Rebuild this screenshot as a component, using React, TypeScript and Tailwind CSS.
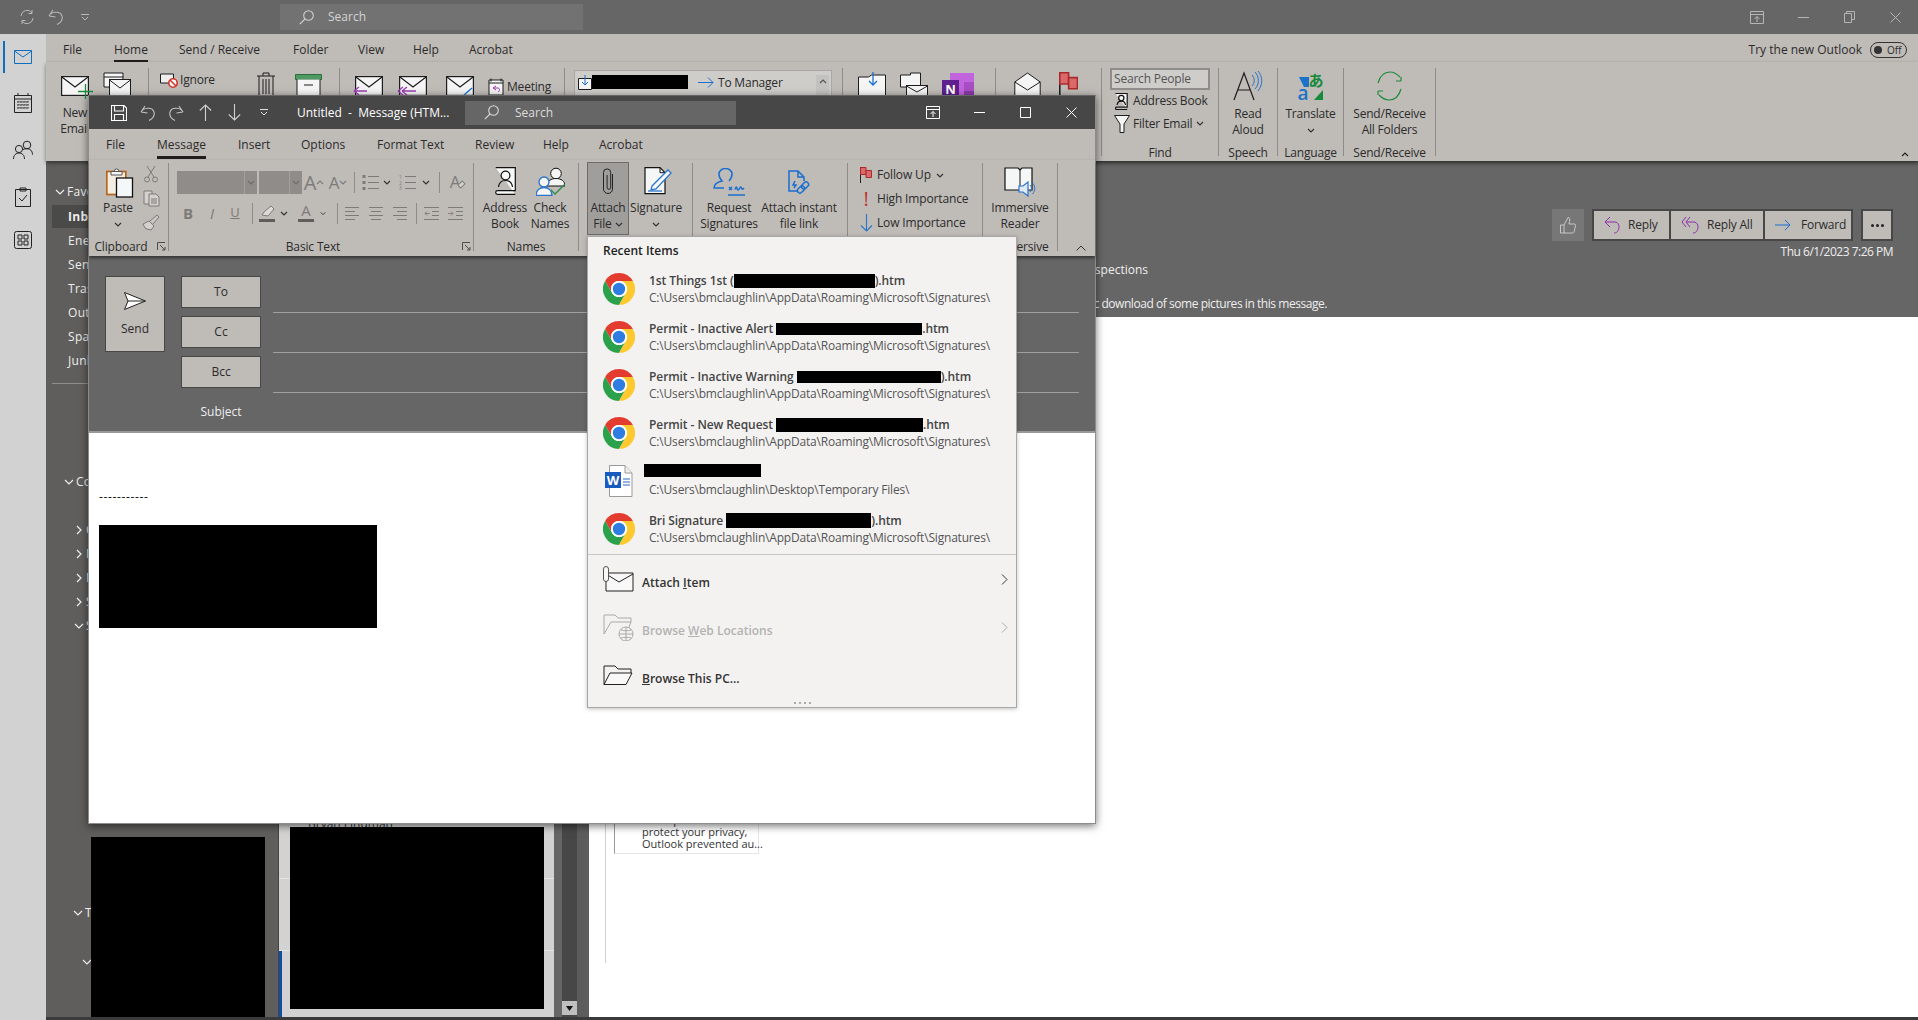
import React from "react";

const Ch = ({ c = "#333", r = 0 }: { c?: string; r?: number }) => (
  <svg width="8" height="5" viewBox="0 0 8 5" fill="none" stroke={c} strokeWidth="1.2" style={r ? { transform: `rotate(${r}deg)` } : undefined}>
    <path d="M1 1l3 3 3-3" />
  </svg>
);

const Chrome = () => (
  <svg width="32" height="32" viewBox="0 0 32 32">
    <path fill="#e33b2e" d="M16 0A16 16 0 0 1 29.86 8L16 8A8 8 0 0 0 9.07 20L2.14 8A16 16 0 0 1 16 0Z" />
    <path fill="#2aa14a" d="M2.14 8L9.07 20A8 8 0 0 0 22.93 20L16 32A16 16 0 0 1 2.14 8Z" />
    <path fill="#fdc92f" d="M16 32L22.93 20A8 8 0 0 0 16 8L29.86 8A16 16 0 0 1 16 32Z" />
    <circle cx="16" cy="16" r="8" fill="#fff" />
    <circle cx="16" cy="16" r="6.2" fill="#2f7de1" />
  </svg>
);

const WordDoc = () => (
  <svg width="28" height="32" viewBox="0 0 28 32">
    <path d="M4.5 .5H20L27 8V31.5H4.5Z" fill="#fff" stroke="#9a9a9a" />
    <path d="M20 .5V8H27" fill="#eee" stroke="#9a9a9a" />
    <path d="M18 14h7M18 17h7M18 20h7" stroke="#2b66c0" />
    <rect x="0" y="7" width="16" height="16" fill="#185abd" />
    <text x="8" y="20" fontSize="13" fontWeight="700" textAnchor="middle" fill="#fff" fontFamily="Open Sans">W</text>
  </svg>
);

const Env = ({ w = 28, h = 20 }: { w?: number; h?: number }) => (
  <svg width={w} height={h} viewBox="0 0 28 20" fill="#f5f5f5" stroke="#1d1d1d" strokeWidth="1.2">
    <rect x=".6" y=".6" width="26.8" height="18.8" />
    <path d="M.6 .8L14 11 27.4 .8" fill="none" />
  </svg>
);

const Quick = ({ children, w, h }: { children: React.ReactNode; w: number; h: number }) => (
  <svg width={w} height={h} viewBox={`0 0 ${w} ${h}`} fill="none" stroke="#1d1d1d" strokeWidth="1">
    {children}
  </svg>
);

const Grey = "#7d7b79";

const Paste = () => (
  <div className="ml-[3px]">
    <Quick w={28} h={31}>
      <rect x=".8" y="4.5" width="19" height="23" fill="#f4ede2" stroke="#b5651d" strokeWidth="1.7" />
      <path d="M5 4.5h11v3.5H5zM8 4.5a2.5 2.5 0 0 1 5 0" fill="#f5f5f5" stroke="#555" />
      <rect x="10.5" y="11" width="16" height="19" fill="#f5f8f8" stroke="#111" strokeWidth="1.3" />
    </Quick>
  </div>
);
const Scissors = () => (
  <Quick w={14} h={18}>
    <g stroke={Grey}>
      <path d="M3 1l7 11M11 1L4 12" />
      <circle cx="3" cy="14.5" r="2.5" />
      <circle cx="11" cy="14.5" r="2.5" />
    </g>
  </Quick>
);
const CopyI = () => (
  <Quick w={17} h={17}>
    <g stroke={Grey}>
      <path d="M1 1h8v13H1z" fill="#d4d2cf" />
      <path d="M6 4h7l3 3v9H6z" fill="#d4d2cf" />
      <path d="M8 9h6M8 11h6M8 13h6" />
    </g>
  </Quick>
);
const Brush = () => (
  <Quick w={18} h={17}>
    <g stroke={Grey}>
      <path d="M1 10l6-3 5 5-3 4-4-1-2-1z" fill="#d4d2cf" />
      <path d="M8 7l7-6 2 2-6 7" fill="#c9c7c4" />
    </g>
  </Quick>
);
const ListI = ({ num }: { num?: boolean }) => (
  <Quick w={17} h={15}>
    <g stroke={Grey}>
      <path d="M6 1.5h11M6 7.5h11M6 13.5h11" />
      {num ? (
        <g stroke="none" fill={Grey} fontSize="5" fontFamily="Open Sans">
          <text x="0" y="4">1</text>
          <text x="0" y="10">2</text>
          <text x="0" y="15">3</text>
        </g>
      ) : (
        <path d="M.5 0h3v3h-3zM.5 6h3v3h-3zM.5 12h3v3h-3z" fill={Grey} stroke="none" />
      )}
    </g>
  </Quick>
);
const Align = ({ k }: { k: 0 | 1 | 2 }) => {
  const d = k === 0 ? "M1 1.5h14M1 5.5h10M1 9.5h14M1 13.5h10" : k === 1 ? "M1 1.5h14M3 5.5h10M1 9.5h14M3 13.5h10" : "M1 1.5h14M5 5.5h10M1 9.5h14M5 13.5h10";
  return (
    <Quick w={16} h={15}>
      <path d={d} stroke={Grey} />
    </Quick>
  );
};
const Indent = ({ rev }: { rev?: boolean }) => (
  <Quick w={15} h={15}>
    <g stroke={Grey}>
      <path d="M0 1.5h15M8 5.5h7M8 9.5h7M0 13.5h15" />
      {rev ? <path d="M6 7.5H1M3 5.5l-2 2 2 2" stroke="#8d7f7d" /> : <path d="M0 7.5h5M3 5.5l2 2-2 2" stroke="#8d7f7d" />}
    </g>
  </Quick>
);
const Launch = () => (
  <Quick w={9} h={9}>
    <path d="M.5 8V.5H8M3 3l5 5M8 5v3H5" stroke="#4d4d4d" />
  </Quick>
);
const AddrBook = ({ s = 1 }: { s?: number }) => (
  <svg width={21 * s} height={28 * s} viewBox="0 0 21 28" fill="none" stroke="#111" strokeWidth={1.2 / s}>
    <path d="M.7 .7h19.6v23H2.5a1.8 1.8 0 0 0 0 3.6h17.8" fill="#f7f8f8" />
    <circle cx="10.5" cy="8.5" r="4.4" />
    <path d="M3.5 20c.5-4 3-6.5 7-6.5s6.5 2.500 7 6.500" />
  </svg>
);
const CheckNames = () => (
  <Quick w={29} h={29}>
    <circle cx="20" cy="6.500" r="5.300" fill="#f5f5f5" stroke="#111" />
    <path d="M11 19c0-5 4-7.500 9-7.500s9 2.500 9 7.500z" fill="#f5f5f5" stroke="#111" />
    <circle cx="8" cy="15" r="5" fill="#f5f5f5" stroke="#2a74c9" strokeWidth="1.300" />
    <path d="M0 28.500c0-5 3.500-8 8-8s8 3 8 8z" fill="#f5f5f5" stroke="#2a74c9" strokeWidth="1.300" />
    <path d="M15 23l4 4 10-10" stroke="#2e8b4a" strokeWidth="1.300" />
  </Quick>
);
const Clip = () => (
  <Quick w={13} h={29}>
    <path d="M10.500 7v15a4.500 4.500 0 0 1-9 0V5.500a3.600 3.600 0 0 1 7.200 0v15a1.800 1.800 0 0 1-3.600 0V8" stroke="#222" strokeWidth="1" />
  </Quick>
);
const Sign = () => (
  <Quick w={28} h={28}>
    <path d="M1 .7h15l5 5v21H1z" fill="#f5f7f7" stroke="#111" strokeWidth="1.200" />
    <path d="M16 .7v5h5" stroke="#111" />
    <path d="M8 19L24 3l3 3-15 16-5 1z" fill="#f5f7f7" stroke="#2a74c9" strokeWidth="1.300" />
    <path d="M4 24h14" stroke="#2a74c9" strokeWidth="1.300" />
  </Quick>
);
const ReqSign = () => (
  <Quick w={32} h={28}>
    <g stroke="#1a6fd0" strokeWidth="1.500">
      <path d="M11 20H1C1 16 5 14 9 13 7 11 6 8 6 6A6.500 5.500 0 0 1 19 6C19 9 18 11 16 13" />
      <path d="M16 19l3 3M19 19l-3 3M22 21.500c1-3 1.500-3 2-1s1.500 2 2.500 0 1.500-2 2-.5 1.500 1.500 2.500 0M15 27h17" />
    </g>
  </Quick>
);
const AttachLink = () => (
  <Quick w={22} h={24}>
    <g stroke="#1a6fd0" strokeWidth="1.500">
      <path d="M10 21H1V1h9l6 6v4M10 1v6h6" />
      <path d="M7 11l-2 4h3l-2 3" />
      <rect x="9" y="17" width="8" height="5" rx="2.500" transform="rotate(-45 13 19.500)" />
      <rect x="13" y="13" width="8" height="5" rx="2.500" transform="rotate(-45 17 15.500)" />
    </g>
  </Quick>
);
const Flag = ({ s = 1 }: { s?: number }) => (
  <svg width={12 * s} height={16 * s} viewBox="0 0 12 16" fill="none">
    <path d="M.5 0v16" stroke="#222" />
    <path d="M.5 .5h5.500v7H.5z" fill="#d96a69" stroke="#a92a2a" />
    <path d="M6 3.500h5.500v7H6z" fill="#d96a69" stroke="#a92a2a" />
  </svg>
);
const Immersive = () => (
  <Quick w={32} h={31}>
    <path d="M1 1h13l2 2 2-2h10v22H1z" fill="#f5f7f7" stroke="#111" strokeWidth="1.200" />
    <path d="M16 3v20" stroke="#111" />
    <path d="M15 19h4l5-4v14l-5-4h-4z" fill="#dfe9f2" stroke="#2a74c9" strokeWidth="1.200" />
    <path d="M26 18c2 2 2 5 0 7M28.500 16c3 3.500 3 7.500 0 11" stroke="#2a74c9" />
  </Quick>
);
const Win = ({ c, restore }: { c: string; restore?: boolean }) => (
  <div className="flex items-center">
    <div className="w-[46px] flex justify-center">
      <svg width="14" height="13" viewBox="0 0 14 13" fill="none" stroke={c}>
        <path d="M.5 .5h13v12H.5zM.5 3.500h13M7 11V5.500M4.500 8L7 5.500 9.500 8" />
      </svg>
    </div>
    <div className="w-[46px] flex justify-center">
      <svg width="11" height="1" viewBox="0 0 11 1"><path d="M0 .5h11" stroke={c} /></svg>
    </div>
    <div className="w-[46px] flex justify-center">
      {restore ? (
        <svg width="11" height="12" viewBox="0 0 11 12" fill="none" stroke={c}><path d="M.5 2.500h7v9h-7zM2.500 2.500V.5h8v8h-3" /></svg>
      ) : (
        <svg width="11" height="11" viewBox="0 0 11 11" fill="none" stroke={c}><path d="M.5 .5h10v10H.5z" /></svg>
      )}
    </div>
    <div className="w-[46px] flex justify-center">
      <svg width="11" height="11" viewBox="0 0 11 11" fill="none" stroke={c}><path d="M.5 .5l10 10M10.500 .5l-10 10" /></svg>
    </div>
  </div>
);
const Glass = ({ c }: { c: string }) => (
  <svg width="15" height="15" viewBox="0 0 15 15" fill="none" stroke={c} strokeWidth="1.100">
    <circle cx="9.500" cy="5.500" r="4.800" />
    <path d="M6 9L.8 14.200" />
  </svg>
);
const Undo = ({ c, flip }: { c: string; flip?: boolean }) => (
  <svg width="15" height="16" viewBox="0 0 15 16" fill="none" stroke={c} strokeWidth="1.100" style={flip ? { transform: "scaleX(-1)" } : undefined}>
    <path d="M1 7l4-6M1 7l6.500 1M1 7c2-4 11-6 13 0 1 4-2 7-5 8.500" />
  </svg>
);
const UpDown = ({ c, down }: { c: string; down?: boolean }) => (
  <svg width="13" height="17" viewBox="0 0 13 17" fill="none" stroke={c} strokeWidth="1.100" style={down ? { transform: "scaleY(-1)" } : undefined}>
    <path d="M6.500 17V1M.8 6.500L6.500 1l5.700 5.500" />
  </svg>
);
const Custom = ({ c }: { c: string }) => (
  <svg width="8" height="7" viewBox="0 0 8 7" fill="none" stroke={c}>
    <path d="M0 .5h8M1 3l3 3 3-3" />
  </svg>
);

const Cell = ({ w, children }: { w: string; children?: React.ReactNode }) => (
  <div className={`${w} flex items-center justify-center shrink-0`}>{children}</div>
);
const VSep = () => <div className="w-px h-[88px] mt-[3px] bg-[#8e8c8a] shrink-0" />;
const TinySep = () => <div className="w-px h-[21px] bg-[#8e8c8a]" />;

const Large = ({ w, lines, icon, chev, className = "" }: { w: string; lines: string[]; icon: React.ReactNode; chev?: boolean; className?: string }) => (
  <div className={`${w} ${className} flex flex-col items-center shrink-0 pt-[7px] whitespace-nowrap`}>
    <div className="h-[33px] flex items-start justify-center">{icon}</div>
    {lines.map((l) => (
      <div key={l} className="h-[16px] leading-[16px]">{l}</div>
    ))}
    {chev && <div className="h-[16px] flex items-center"><Ch /></div>}
  </div>
);

const Group = ({ w, label, children, pr, launcher }: { w: string; label?: string; children?: React.ReactNode; pr?: string; launcher?: boolean }) => (
  <div className={`${w} flex flex-col h-[96px] shrink-0`}>
    <div className="h-[79px] flex">{children}</div>
    <div className={`relative h-[16px] leading-[16px] text-center ${pr ?? ""}`}>
      {label}
      {launcher && <div className="absolute right-[2px] top-[3px]"><Launch /></div>}
    </div>
  </div>
);

const Tab = ({ w, label, on, uw }: { w: string; label: string; on?: boolean; uw?: string }) => (
  <div className={`${w} shrink-0 flex items-center`}>
    <span className={`relative ${on ? "font-[500]" : ""}`}>
      {label}
      {on && <span className={`absolute left-0 right-0 top-[20px] h-[3px] bg-[#201f1e] ${uw ?? ""}`} />}
    </span>
  </div>
);

const Redact = ({ w, h = "h-[14px]" }: { w: string; h?: string }) => <span className={`inline-block ${w} ${h} bg-black shrink-0`} />;

const Recent = ({ head, path, word }: { head: React.ReactNode; path: string; word?: boolean }) => (
  <div className="h-[48px] flex items-center pl-[15px]">
    <div className="w-[32px] h-[32px] flex justify-center shrink-0">{word ? <WordDoc /> : <Chrome />}</div>
    <div className="ml-[14px] flex flex-col whitespace-nowrap">
      <div className="h-[16px] leading-[16px] font-semibold text-[#444] flex items-center tracking-[-0.08px]">{head}</div>
      <div className="h-[17px] leading-[17px] text-[#555] tracking-[-0.19px]">{path}</div>
    </div>
  </div>
);
const SIG = "C:\\Users\\bmclaughlin\\AppData\\Roaming\\Microsoft\\Signatures\\";

const SmallRow = ({ icon, children }: { icon: React.ReactNode; children: React.ReactNode }) => (
  <div className="h-[24px] flex items-center">
    <div className="w-[20px] ml-[8px] flex justify-center shrink-0">{icon}</div>
    <div className="ml-[1px] whitespace-nowrap flex items-center gap-[5px]">{children}</div>
  </div>
);

const VOuter = () => <div className="w-px h-[88px] mt-[6px] bg-[#8e8c8a] shrink-0" />;

const EnvArrow = ({ kind }: { kind: "reply" | "all" | "fwd" }) => (
  <div className="relative w-[28px] h-[20px]">
    <Env />
    <div className="absolute left-[-2px] top-[10px]">
      {kind === "fwd" ? (
        <svg width="32" height="10" viewBox="0 0 32 10" fill="none" stroke="#1a6fd0" strokeWidth="1.300"><path d="M20 9l8-7" /></svg>
      ) : (
        <svg width="20" height="10" viewBox="0 0 20 10" fill="none" stroke="#9a3db3" strokeWidth="1.300">
          {kind === "all" && <path d="M1 5l5-4M1 5l5 4" />}
          <path d={kind === "all" ? "M5 5l5-4M5 5l5 4M5 5h14" : "M1 5l5-4M1 5l5 4M1 5h13"} />
        </svg>
      )}
    </div>
  </div>
);

const RibbonOuter = () => (
  <div className="h-[99px] flex bg-[#bfbbb7] shadow-[0_2px_4px_rgba(0,0,0,0.45)] relative z-10 text-[#2b2b2b] tracking-[-0.2px]">
    <div className="w-[102px] flex items-start pt-[10px] shrink-0">
      <div className="w-[56px] flex flex-col items-center ml-px">
        <div className="relative mt-[4px]">
          <Env />
          <div className="absolute left-[17px] top-[8px]">
            <svg width="15" height="15" viewBox="0 0 15 15" stroke="#1f8a3c" strokeWidth="1.300"><path d="M7.500 0v15M0 7.500h15" /></svg>
          </div>
        </div>
        <div className="mt-[9px] leading-[16px] text-center">New<br />Email</div>
      </div>
      <Quick w={28} h={24}>
        <path d="M1 1h19v14H1zM1 5h19" fill="#f5f5f5" />
        <rect x="6.500" y="7.500" width="21" height="16" fill="#f5f5f5" />
        <path d="M6.500 8l10.500 8L27.500 8" />
      </Quick>
    </div>
    <VOuter />
    <div className="w-[190px] flex items-start pt-[10px] shrink-0">
      <div className="ml-[11px] mt-[-1px] flex items-center w-[96px]">
        <svg width="19" height="15" viewBox="0 0 19 15" fill="none" stroke="#1d1d1d">
          <path d="M.5 1h13v9H.5z" fill="#eee" />
          <circle cx="13" cy="10" r="4.200" fill="#fff" stroke="#d2342a" strokeWidth="1.600" />
          <path d="M10 7l6 6" stroke="#d2342a" strokeWidth="1.600" />
        </svg>
        <span className="ml-px">Ignore</span>
      </div>
      <Quick w={20} h={24}>
        <path d="M1 4h18M7 4V1h6v3M3 4v20h14V4M7 7v15M10 7v15M13 7v15" />
      </Quick>
      <div className="ml-[19px] mt-[2px]">
        <Quick w={27} h={22}>
          <path d="M.5 .5h26v5H.5z" fill="#4f9a62" stroke="#2c6e3d" />
          <path d="M2 5.500v16h23v-16" fill="#f5f5f5" />
          <path d="M9 11h9" />
        </Quick>
      </div>
    </div>
    <VOuter />
    <div className="w-[224px] flex items-start pt-[14px] pl-[15px] shrink-0 gap-[16px]">
      <EnvArrow kind="reply" />
      <EnvArrow kind="all" />
      <div className="ml-[3px]"><EnvArrow kind="fwd" /></div>
      <div className="ml-[-2px] flex items-center mt-[2px]">
        <svg width="16" height="18" viewBox="0 0 16 18" fill="none" stroke="#1d1d1d"><path d="M1 2h14v15H1zM1 5h14" fill="#f5f5f5" /><path d="M3 .5v3M13 .5v3" /><path d="M5 10l3-2M5 10l3 2M5 10h5c2 0 2 3 0 4" stroke="#9a3db3" /></svg>
        <span className="ml-[3px]">Meeting</span>
      </div>
    </div>
    <VOuter />
    <div className="w-[277px] pt-[8px] pl-[9px] shrink-0">
      <div className="w-[258px] h-[40px] bg-[#cfcdca] border border-[#a9a7a5] flex items-start pt-[4px] relative">
        <div className="ml-[3px]">
          <svg width="14" height="15" viewBox="0 0 14 15" fill="#f5f5f5" stroke="#1d1d1d"><path d="M.5 3.500h13v11H.5z" /><path d="M7 0v10M4 7l3 3 3-3" stroke="#1a6fd0" fill="none" /></svg>
        </div>
        <Redact w="w-[96px]" />
        <div className="ml-[10px] mt-[2px]">
          <svg width="16" height="11" viewBox="0 0 16 11" fill="none" stroke="#1a6fd0"><path d="M0 5.500h15M10 .5l5 5-5 5" /></svg>
        </div>
        <span className="ml-[4px] leading-[15px]">To Manager</span>
        <div className="ml-auto mr-[2px] w-[13px] h-[34px] bg-[#c4c2bf] flex justify-center pt-[4px]"><Ch c="#555" r={180} /></div>
      </div>
    </div>
    <VOuter />
    <div className="w-[152px] flex items-start pt-[10px] pl-[15px] shrink-0 gap-[14px]">
      <Quick w={28} h={26}><path d="M.5 5h10l3-2h14v22H.5z" fill="#f5f5f5" /><path d="M15 0v13M11 9l4 4 4-4" stroke="#1a6fd0" strokeWidth="1.300" /></Quick>
      <Quick w={28} h={26}><path d="M.5 3h10v-2h10v14H.5z" fill="#f5f5f5" /><rect x="6.500" y="13.500" width="21" height="12" fill="#f5f5f5" /><path d="M6.500 14l10.500 6 10.500-6" /></Quick>
      <div className="mt-px flex">
        <svg width="32" height="27" viewBox="0 0 32 27">
          <rect x="8" y="0" width="24" height="27" fill="#c264dd" />
          <rect x="22" y="9" width="10" height="9" fill="#a84ec4" />
          <rect x="22" y="18" width="10" height="9" fill="#8a3aa9" />
          <rect x="0" y="7" width="17" height="17" fill="#5f1f8e" />
          <text x="8.500" y="20.500" fontSize="13" fontWeight="700" textAnchor="middle" fill="#fff" fontFamily="Open Sans">N</text>
        </svg>
      </div>
    </div>
    <VOuter />
    <div className="w-[105px] flex items-start pt-[10px] pl-[18px] shrink-0 gap-[18px]">
      <Quick w={27} h={26}><path d="M.8 10L13.500 1 26.200 10V26H.8z" fill="#f5f5f5" /><path d="M.8 10l12.700 8 12.700-8" /></Quick>
      <Flag s={1.600} />
    </div>
    <VOuter />
    <div className="w-[116px] shrink-0 flex flex-col pl-[8px]">
      <div className="w-[100px] h-[22px] mt-[6px] border-2 border-[#8f8d8b] bg-[#cfcdca] flex items-center pl-[2px] text-[#555]">Search People</div>
      <div className="h-[23px] flex items-center">
        <div className="w-[23px] flex justify-center"><AddrBook s={0.6} /></div>
        <span>Address Book</span>
      </div>
      <div className="h-[23px] flex items-center">
        <div className="w-[23px] flex justify-center">
          <Quick w={16} h={18}><path d="M.5 .5h15L10 9v8.500H6V9z" fill="#f5f5f5" /></Quick>
        </div>
        <span>Filter Email</span>
        <span className="ml-[4px]"><Ch /></span>
      </div>
      <div className="mt-[10px] mr-[8px] text-center leading-[16px]">Find</div>
    </div>
    <VOuter />
    <div className="w-[58px] shrink-0 flex flex-col items-center pt-[9px]">
      <div className="h-[33px]">
        <svg width="30" height="30" viewBox="0 0 30 30" fill="none">
          <path d="M1 29L11 2l10 27M5 19h12" stroke="#1d1d1d" strokeWidth="1.200" />
          <path d="M19 4c3 3 3 8 0 11M22 1c4.500 4.500 4.500 12.500 0 17M25 0c5 6 5 13.500 0 20" stroke="#2a74c9" />
        </svg>
      </div>
      <div className="mt-[3px] leading-[16px] text-center">Read<br />Aloud</div>
      <div className="mt-[7px] leading-[16px]">Speech</div>
    </div>
    <VOuter />
    <div className="w-[65px] shrink-0 flex flex-col items-center pt-[9px]">
      <div className="h-[33px]">
        <svg width="28" height="30" viewBox="0 0 28 30">
          <path d="M2 6h10v10H7z" fill="#1a72c9" />
          <text x="19" y="15" fontSize="15" fill="#148a3a" textAnchor="middle" fontFamily="Noto Sans CJK JP" fontWeight="700">あ</text>
          <text x="6" y="29" fontSize="19" fill="#1a72c9" textAnchor="middle" fontFamily="Open Sans" fontWeight="600">a</text>
          <path d="M17 29l9-10v10z" fill="#148a3a" />
        </svg>
      </div>
      <div className="mt-[3px] leading-[16px]">Translate</div>
      <div className="h-[16px] flex items-center"><Ch /></div>
      <div className="mt-[7px] leading-[16px]">Language</div>
    </div>
    <VOuter />
    <div className="w-[91px] shrink-0 flex flex-col items-center pt-[9px]">
      <div className="h-[33px]">
        <svg width="29" height="30" viewBox="0 0 29 30" fill="none" stroke="#1f8a3c" strokeWidth="1.200">
          <path d="M3 12C5 5 9 1 15 1c4 0 7 2 10 5M26 6v4M26 10h-5M26 18c-2 7-6 11-12 11-4 0-7-2-10-5M3 24v-4M3 20h5" />
        </svg>
      </div>
      <div className="mt-[3px] leading-[16px] text-center whitespace-nowrap">Send/Receive<br />All Folders</div>
      <div className="mt-[7px] leading-[16px] whitespace-nowrap">Send/Receive</div>
    </div>
    <VOuter />
    <div className="flex-1 flex justify-end items-end pb-[4px] pr-[9px]"><Ch c="#222" r={180} /></div>
  </div>
);

const Folder = ({ label, bold, ml = "ml-[22px]" }: { label: string; bold?: boolean; ml?: string }) => (
  <div className={`h-[24px] flex items-center ${ml} ${bold ? "font-bold" : ""}`}>{label}</div>
);
const FolderHead = ({ label, ml, open = true }: { label: string; ml: string; open?: boolean }) => (
  <div className={`h-[24px] flex items-center ${ml}`}>
    <svg width="10" height="10" viewBox="0 0 10 10" fill="none" stroke="#eee" strokeWidth="1.200" className="mr-[2px]">
      {open ? <path d="M1 3l4 4 4-4" /> : <path d="M3 1l4 4-4 4" />}
    </svg>
    <span>{label}</span>
  </div>
);

export default function App() {
  return (
    <div className="relative w-[1918px] h-[1020px] overflow-hidden bg-[#666] flex flex-col font-['Open_Sans',sans-serif] text-[12px]">
      {/* main title bar */}
      <div className="h-[34px] flex items-center bg-[#666] shrink-0 text-[#d4d4d4]">
        <div className="w-[12px]" />
        <Cell w="w-[29px]">
          <svg width="16" height="16" viewBox="0 0 16 16" fill="none" stroke="#b9b9b9"><path d="M2 7a6 6 0 0 1 11-3M14 9a6 6 0 0 1-11 3M13 1v3.500H9.500M3 15v-3.500h3.500" /></svg>
        </Cell>
        <Cell w="w-[29px]"><Undo c="#b9b9b9" /></Cell>
        <Cell w="w-[29px]"><Custom c="#b9b9b9" /></Cell>
        <div className="ml-[181px] w-[303px] h-[26px] bg-[#727272] flex items-center pl-[19px]">
          <Glass c="#d0d0d0" />
          <span className="ml-[14px]">Search</span>
        </div>
        <div className="ml-auto"><Win c="#b5b5b5" restore /></div>
      </div>
      <div className="flex-1 flex min-h-0">
        {/* rail */}
        <div className="w-[46px] bg-[#d2d2d2] shrink-0 relative flex flex-col items-center pt-[15px] gap-[22px]">
          <div className="absolute left-[3px] top-[7px] w-[2px] h-[32px] bg-[#106ebe]" />
          <svg width="18" height="14" viewBox="0 0 18 14" fill="none" stroke="#106ebe" className="mt-[1px]"><path d="M.5 .5h17v13H.5zM.5 1l8.500 6 8.500-6" /></svg>
          <svg width="18" height="20" viewBox="0 0 18 20" fill="none" stroke="#222" className="mt-[7px]"><path d="M.5 2.500h17v17H.5zM.5 6h17M4 0v3M14 0v3" /><path d="M3 9h12M3 12h12M3 15h12M5 8v9M8 8v9M11 8v9M14 8v9" strokeDasharray="1.500 1.500" /></svg>
          <svg width="20" height="20" viewBox="0 0 20 20" fill="none" stroke="#222" className="mt-[5px]"><circle cx="14" cy="5" r="3.800" /><circle cx="6" cy="9" r="3.600" /><path d="M.5 19c0-4 2.500-6 5.500-6s5.500 2 5.500 6M10 9.500c1-.500 2.500-.800 4-.800 3 0 5.500 2 5.500 6" /></svg>
          <svg width="16" height="20" viewBox="0 0 16 20" fill="none" stroke="#222" className="mt-[5px]"><path d="M.5 2.500h15v17H.5zM5 4V1h6v3zM4 11l3 3 5-6" /></svg>
          <svg width="18" height="18" viewBox="0 0 18 18" fill="none" stroke="#222" className="mt-[2px]"><rect x=".5" y=".5" width="17" height="17" rx="2" /><path d="M4 4h4v4H4zM10 4h4v4h-4zM4 10h4v4H4zM10 10h4v4h-4z" /></svg>
        </div>
        <div className="flex-1 flex flex-col min-w-0">
          {/* main tabs */}
          <div className="h-[28px] bg-[#bfbbb7] flex items-center pl-[17px] pt-[4px] text-[#2b2b2b] shrink-0">
            <Tab w="w-[51px]" label="File" />
            <Tab w="w-[65px]" label="Home" on uw="!top-[19px]" />
            <Tab w="w-[114px]" label="Send / Receive" />
            <Tab w="w-[65px]" label="Folder" />
            <Tab w="w-[55px]" label="View" />
            <Tab w="w-[56px]" label="Help" />
            <Tab w="w-[60px]" label="Acrobat" />
            <div className="ml-auto flex items-center">
              <span>Try the new Outlook</span>
              <div className="ml-[8px] w-[37px] h-[16px] rounded-full border border-[#333] flex items-center pl-[3px] gap-[5px]">
                <span className="w-[8px] h-[8px] rounded-full bg-[#333]" />
                <span className="text-[10px] leading-none">Off</span>
              </div>
              <div className="w-[11px]" />
            </div>
          </div>
          <RibbonOuter />
          <div className="flex-1 flex min-h-0">
            {/* folder pane */}
            <div className="w-[232px] bg-[#5f5e5c] shrink-0 relative flex flex-col text-[#eee] text-[12px] pt-[19px] tracking-[0.3px]">
              <FolderHead label="Favorites" ml="ml-[9px]" />
              <div className="mx-[6px] my-px h-[23px] bg-[#4a4a48] flex items-center pl-[16px] font-bold">Inbox</div>
              <Folder label="Enerv" />
              <Folder label="Sent Items" />
              <Folder label="Trash" />
              <Folder label="Outbox" />
              <Folder label="Spam" />
              <Folder label="Junk" />
              <div className="mx-[6px] mt-[10px] h-px bg-[#8e8e8c]" />
              <div className="h-[86px]" />
              <FolderHead label="Compliance" ml="ml-[18px]" />
              <div className="h-[24px]" />
              <FolderHead label="Customers" ml="ml-[28px]" open={false} />
              <FolderHead label="Inspections" ml="ml-[28px]" open={false} />
              <FolderHead label="Permits" ml="ml-[28px]" open={false} />
              <FolderHead label="Signatures" ml="ml-[28px]" open={false} />
              <FolderHead label="Staff" ml="ml-[28px]" />
              <div className="h-[263px]" />
              <FolderHead label="Tasks" ml="ml-[27px]" />
              <div className="h-[25px]" />
              <FolderHead label="" ml="ml-[36px]" />
              <div className="absolute left-[45px] top-[676px] w-[174px] h-[180px] bg-black" />
            </div>
            {/* message list */}
            <div className="w-[276px] bg-[#d2d2d2] shrink-0 relative border-l border-[#444] flex flex-col">
              <div className="mt-[655px] pl-[29px] text-[#333] h-[16px] leading-[16px]">Bryan Lindman</div>
              <div className="absolute left-0 top-[717px] h-px w-full bg-[#e4e4e4]" />
              <div className="absolute left-0 top-[789px] h-px w-full bg-[#e4e4e4]" />
              <div className="absolute left-0 top-[790px] w-[3px] h-[66px] bg-[#0f4ea1]" />
              <div className="absolute left-[11px] top-[666px] w-[254px] h-[182px] bg-black" />
            </div>
            {/* scrollbar */}
            <div className="w-[8px] bg-[#666] shrink-0" />
            <div className="w-[15px] bg-[#474747] shrink-0 flex flex-col justify-end pb-[2px]">
              <div className="h-[14px] bg-[#bfbfbf] flex items-center justify-center">
                <svg width="7" height="5" viewBox="0 0 7 5"><path d="M0 0h7L3.500 5z" fill="#111" /></svg>
              </div>
            </div>
            <div className="w-[12px] bg-[#5c5c5c] shrink-0" />
            {/* reading column */}
            <div className="flex-1 flex flex-col min-w-0">
              <div className="h-[156px] bg-[#666] shrink-0 flex flex-col text-[#eee] shadow-[inset_0_4px_4px_-3px_rgba(0,0,0,0.3)]">
                <div className="mt-[48px] flex justify-end pr-[25px]">
                  <div className="w-[32px] h-[32px] bg-[#777] flex items-center justify-center">
                    <svg width="16" height="17" viewBox="0 0 16 17" fill="none" stroke="#c8c8c8"><path d="M.5 8h3.500v8H.5zM4 8l4-7.500c2 0 2 2 1.500 4L9 7h5.500c1 0 1.200 1 1 2l-1.500 6c-.2 1-1 1-2 1H4" /></svg>
                  </div>
                  <div className="ml-[8px] h-[32px] flex border-2 border-[#474747] bg-[#bfbbb7] text-[#2b2b2b] tracking-[-0.2px]">
                    <div className="w-[77px] border-r-2 border-[#474747] flex items-center pl-[10px]">
                      <svg width="16" height="18" viewBox="0 0 16 18" fill="none" stroke="#8e2fb0"><path d="M1 6l5-5M1 6l5 5M1 6h10c3 0 4 3 4 5s-1 6-5 6" /></svg>
                      <span className="ml-[8px]">Reply</span>
                    </div>
                    <div className="w-[94px] border-r-2 border-[#474747] flex items-center pl-[10px]">
                      <svg width="18" height="18" viewBox="0 0 18 18" fill="none" stroke="#8e2fb0"><path d="M5 6l4-5M5 6l4 5M1 6l4-5M1 6l4 5M5 6h8c3 0 4 3 4 5s-1 6-5 6" /></svg>
                      <span className="ml-[8px]">Reply All</span>
                    </div>
                    <div className="w-[86px] flex items-center pl-[10px]">
                      <svg width="16" height="12" viewBox="0 0 16 12" fill="none" stroke="#1a6fd0"><path d="M0 6h15M10 1l5 5-5 5" /></svg>
                      <span className="ml-[10px]">Forward</span>
                    </div>
                  </div>
                  <div className="ml-[8px] w-[32px] h-[32px] border-2 border-[#474747] bg-[#bfbbb7] flex items-center justify-center gap-[2px]">
                    <span className="w-[3px] h-[3px] rounded-full bg-[#222]" />
                    <span className="w-[3px] h-[3px] rounded-full bg-[#222]" />
                    <span className="w-[3px] h-[3px] rounded-full bg-[#222]" />
                  </div>
                </div>
                <div className="mt-[3px] pr-[25px] text-right h-[16px] leading-[16px] tracking-[-0.5px]">Thu 6/1/2023 7:26 PM</div>
                <div className="mt-[2px] w-[559px] h-[16px] leading-[16px] flex justify-end whitespace-nowrap overflow-hidden">Inspections</div>
                <div className="mt-[18px] w-[738px] h-[16px] leading-[16px] flex justify-end whitespace-nowrap overflow-hidden tracking-[-0.45px]">Click here to download pictures. To help protect your privacy, Outlook prevented automatic download of some pictures in this message.</div>
              </div>
              <div className="flex-1 bg-white flex pl-[16px] min-h-0">
                <div className="w-px h-[646px] bg-[#cfcfcf]" />
                <div className="ml-[8px] mt-[480px] w-[145px] h-[57px] border-l border-l-[#9a9a9a] border-r border-r-[#e6e6e6] border-b border-b-[#e6e6e6] pl-[27px] pt-[8px] text-[11px] leading-[12px] text-[#333] flex flex-col justify-end pb-[3px] whitespace-nowrap">
                  <div>To help</div>
                  <div>protect your privacy,</div>
                  <div>Outlook prevented au...</div>
                </div>
              </div>
            </div>
          </div>
          <div className="h-[3px] bg-[#3a3a3a] shrink-0" />
        </div>
      </div>

      {/* compose window */}
      <div className="absolute left-[88px] top-[95px] w-[1008px] h-[729px] flex flex-col border border-[#8c8c8c] border-t-[#666] shadow-[0_2px_8px_rgba(0,0,0,0.55)] z-20">
        <div className="h-[33px] bg-[#474747] flex items-center text-white shrink-0">
          <div className="w-[15px]" />
          <Cell w="w-[29px]">
            <svg width="16" height="16" viewBox="0 0 16 16" fill="none" stroke="#fff" strokeWidth="1.100"><path d="M.5 .5h12.500l2.500 2.500v12.500H.5zM3.500 .5v5.500h9V.5M3.500 15.500V9.500h9v6" /></svg>
          </Cell>
          <Cell w="w-[29px]"><Undo c="#c4c4c4" /></Cell>
          <Cell w="w-[29px]"><Undo c="#c4c4c4" flip /></Cell>
          <Cell w="w-[29px]"><UpDown c="#d0d0d0" /></Cell>
          <Cell w="w-[29px]"><UpDown c="#d0d0d0" down /></Cell>
          <Cell w="w-[29px]"><Custom c="#e0e0e0" /></Cell>
          <div className="ml-[19px] w-[168px] whitespace-nowrap">Untitled&nbsp; -&nbsp; Message (HTM...</div>
          <div className="w-[271px] h-[24px] bg-[#666] flex items-center pl-[19px] text-[#ddd]">
            <Glass c="#d8d8d8" />
            <span className="ml-[16px]">Search</span>
          </div>
          <div className="ml-[174px]"><Win c="#fff" /></div>
        </div>
        <div className="h-[31px] bg-[#bfbbb7] flex items-center pl-[17px] text-[#2b2b2b] shrink-0">
          <Tab w="w-[51px]" label="File" />
          <Tab w="w-[81px]" label="Message" on />
          <Tab w="w-[63px]" label="Insert" />
          <Tab w="w-[76px]" label="Options" />
          <Tab w="w-[98px]" label="Format Text" />
          <Tab w="w-[68px]" label="Review" />
          <Tab w="w-[56px]" label="Help" />
          <Tab w="w-[60px]" label="Acrobat" />
        </div>
        <div className="h-[96px] bg-[#bfbbb7] flex text-[#2b2b2b] shrink-0 shadow-[0_2px_3px_rgba(0,0,0,0.5)] relative z-10 tracking-[-0.15px]">
          <Group w="w-[79px]" label="Clipboard" pr="pr-[15px]" launcher>
            <Large w="w-[46px]" className="ml-[6px]" lines={["Paste"]} icon={<Paste />} chev />
            <div className="w-[20px] flex flex-col items-center pt-[2px]">
              <Cell w="h-[24px]"><Scissors /></Cell>
              <Cell w="h-[24px]"><CopyI /></Cell>
              <Cell w="h-[24px]"><Brush /></Cell>
            </div>
          </Group>
          <VSep />
          <Group w="w-[304px]" label="Basic Text" pr="pr-[16px]" launcher>
            <div className="flex flex-col pt-[11px]">
              <div className="h-[23px] flex">
                <div className="ml-[8px] w-[80px] bg-[#8f8c89] flex justify-end">
                  <div className="w-[13px] border-l border-[#a3a09d] flex items-center justify-center"><Ch c="#6f6d6b" /></div>
                </div>
                <div className="ml-[2px] w-[43px] bg-[#8f8c89] flex justify-end">
                  <div className="w-[13px] border-l border-[#a3a09d] flex items-center justify-center"><Ch c="#6f6d6b" /></div>
                </div>
                <Cell w="w-[24px]">
                  <span className="text-[20px] leading-none text-[#7d7b79]">A</span>
                  <Ch c="#7d7b79" r={180} />
                </Cell>
                <Cell w="w-[24px]">
                  <span className="text-[17px] leading-none text-[#7d7b79]">A</span>
                  <Ch c="#7d7b79" />
                </Cell>
                <Cell w="w-[8px]"><TinySep /></Cell>
                <Cell w="w-[24px]"><ListI /></Cell>
                <Cell w="w-[10px]"><Ch /></Cell>
                <Cell w="w-[30px]"><ListI num /></Cell>
                <Cell w="w-[8px]"><Ch /></Cell>
                <Cell w="w-[18px]"><TinySep /></Cell>
                <Cell w="w-[14px]">
                  <div className="relative">
                    <span className="text-[17px] leading-none text-[#7d7b79]">A</span>
                    <div className="absolute left-[8px] top-[9px] w-[7px] h-[5px] bg-[#d4d2cf] border border-[#7d7b79] rotate-[-45deg]" />
                  </div>
                </Cell>
              </div>
              <div className="mt-[7px] h-[24px] flex">
                <div className="ml-[7px]" />
                <Cell w="w-[24px]"><span className="text-[15px] font-bold text-[#7d7b79]">B</span></Cell>
                <Cell w="w-[24px]"><span className="text-[15px] italic text-[#7d7b79]">I</span></Cell>
                <Cell w="w-[22px]"><span className="text-[13px] underline text-[#7d7b79]">U</span></Cell>
                <Cell w="w-[12px]"><TinySep /></Cell>
                <Cell w="w-[18px]">
                  <div className="flex flex-col items-center">
                    <Quick w={16} h={13}><path d="M3 10l2-3 7-6 3 3-6 7z" fill="#dcdad7" stroke={Grey} /></Quick>
                    <div className="w-[16px] h-[3px] mt-[1px] bg-[#5f5e5c]" />
                  </div>
                </Cell>
                <Cell w="w-[16px]"><Ch /></Cell>
                <Cell w="w-[28px]">
                  <div className="flex flex-col items-center">
                    <span className="text-[15px] leading-[13px] text-[#7d7b79]">A</span>
                    <div className="w-[16px] h-[3px] mt-[2px] bg-[#5f5e5c]" />
                  </div>
                </Cell>
                <Cell w="w-[6px]"><Ch /></Cell>
                <Cell w="w-[14px]"><div className="ml-[8px]"><TinySep /></div></Cell>
                <Cell w="w-[24px]"><Align k={0} /></Cell>
                <Cell w="w-[24px]"><Align k={1} /></Cell>
                <Cell w="w-[24px]"><Align k={2} /></Cell>
                <Cell w="w-[8px]"><TinySep /></Cell>
                <Cell w="w-[22px]"><Indent rev /></Cell>
                <Cell w="w-[26px]"><Indent /></Cell>
              </div>
            </div>
          </Group>
          <VSep />
          <Group w="w-[104px]" label="Names">
            <Large w="w-[46px]" className="ml-[8px]" lines={["Address", "Book"]} icon={<AddrBook />} />
            <Large w="w-[44px]" lines={["Check", "Names"]} icon={<CheckNames />} />
          </Group>
          <VSep />
          <Group w="w-[113px]">
            <div className="ml-[8px] mt-[2px] w-[42px] h-[73px] bg-[#a09e9b] border border-[#6e6d6b] flex flex-col items-center pt-[4px] whitespace-nowrap">
              <div className="h-[33px]"><Clip /></div>
              <div className="h-[16px] leading-[16px]">Attach</div>
              <div className="h-[16px] leading-[16px] flex items-center gap-[3px]">File <Ch /></div>
            </div>
            <Large w="w-[54px]" lines={["Signature"]} icon={<div className="ml-[3px]"><Sign /></div>} chev />
          </Group>
          <VSep />
          <Group w="w-[154px]">
            <Large w="w-[72px]" lines={["Request", "Signatures"]} icon={<div className="mt-px"><ReqSign /></div>} />
            <Large w="w-[68px]" lines={["Attach instant", "file link"]} icon={<div className="mt-[3px]"><AttachLink /></div>} />
          </Group>
          <VSep />
          <Group w="w-[134px]">
            <div className="flex flex-col pt-[3px]">
              <SmallRow icon={<Flag />}>Follow Up <Ch /></SmallRow>
              <SmallRow icon={<span className="text-[#c5322d] text-[20px] font-[400] leading-none">!</span>}>High Importance</SmallRow>
              <SmallRow icon={<Quick w={13} h={18}><path d="M6.500 0v17M1 11.500l5.500 5.500 5.500-5.500" stroke="#2a74c9" strokeWidth="1.100" /></Quick>}>Low Importance</SmallRow>
            </div>
          </Group>
          <VSep />
          <Group w="w-[74px]" label="Immersive">
            <Large w="w-[74px]" lines={["Immersive", "Reader"]} icon={<Immersive />} />
          </Group>
          <VSep />
          <div className="flex-1 flex items-end justify-end pb-[5px] pr-[9px]"><svg width="10" height="6" viewBox="0 0 10 6" fill="none" stroke="#333"><path d="M.5 5.500L5 1l4.500 4.500" /></svg></div>
        </div>
        <div className="h-[177px] bg-[#666] border-b-2 border-[#999] flex items-start pt-[20px] pl-[16px] shrink-0">
          <div className="w-[60px] h-[76px] bg-[#bfbbb7] border border-[#474747] flex flex-col items-center pt-[15px] text-[#2b2b2b]">
            <svg width="22" height="18" viewBox="0 0 22 18" fill="#fff" stroke="#222"><path d="M.5 .5L21.500 9 .5 17.500 4 9z" /><path d="M4 9h17" /></svg>
            <span className="mt-[11px] leading-[16px]">Send</span>
          </div>
          <div className="ml-[16px] w-[80px] flex flex-col gap-[8px] text-[#2b2b2b]">
            <div className="h-[32px] bg-[#bfbbb7] border border-[#474747] flex items-center justify-center">To</div>
            <div className="h-[32px] bg-[#bfbbb7] border border-[#474747] flex items-center justify-center">Cc</div>
            <div className="h-[32px] bg-[#bfbbb7] border border-[#474747] flex items-center justify-center">Bcc</div>
            <div className="h-[16px] mt-[8px] leading-[16px] text-center text-[#eee]">Subject</div>
          </div>
          <div className="ml-[12px] w-[806px] flex flex-col">
            <div className="h-[37px] border-b border-[#a0a0a0]" />
            <div className="h-[40px] border-b border-[#a0a0a0]" />
            <div className="h-[40px] border-b border-[#a0a0a0]" />
          </div>
        </div>
        <div className="flex-1 bg-white pl-[10px] pt-[56px] min-h-0 text-[#111] leading-[16px]">
          <div className="h-[16px] tracking-[0.65px]">-----------</div>
          <div className="mt-[20px] w-[278px] h-[103px] bg-black" />
        </div>
      </div>

      {/* attach file dropdown */}
      <div className="absolute left-[587px] top-[236px] w-[430px] h-[472px] bg-[#f3f2f1] border border-[#a8a8a8] shadow-[0_1px_4px_rgba(0,0,0,0.25)] z-30 flex flex-col text-[#333]">
        <div className="h-[28px] flex items-center pl-[15px] font-semibold text-[#222]">Recent Items</div>
        <Recent head={<>1st Things 1st (<Redact w="w-[141px]" />).htm</>} path={SIG} />
        <Recent head={<>Permit - Inactive Alert&nbsp;<Redact w="w-[146px]" h="h-[12px]" />.htm</>} path={SIG} />
        <Recent head={<>Permit - Inactive Warning&nbsp;<Redact w="w-[144px]" h="h-[12px]" />).htm</>} path={SIG} />
        <Recent head={<>Permit - New Request&nbsp;<Redact w="w-[147px]" />.htm</>} path={SIG} />
        <Recent word head={<span className="-ml-[5px]"><Redact w="w-[117px]" h="h-[13px]" /></span>} path="C:\Users\bmclaughlin\Desktop\Temporary Files\" />
        <Recent head={<>Bri Signature&nbsp;<Redact w="w-[145px]" h="h-[15px]" />).htm</>} path={SIG} />
        <div className="h-px mt-px bg-[#c9c8c7] shrink-0" />
        <div className="h-[48px] flex items-center pl-[15px] font-semibold">
          <div className="w-[30px] shrink-0">
            <svg width="31" height="26" viewBox="0 0 31 26" fill="none" stroke="#222"><path d="M3 7h27v18H3z" fill="#f8f8f8" /><path d="M3 8l13 8 14-8" /><rect x=".5" y=".5" width="5" height="15" rx="2.500" fill="#f8f8f8" stroke="#555" /></svg>
          </div>
          <span className="ml-[9px] mt-[8px]">Attach <u>I</u>tem</span>
          <div className="ml-auto mr-[8px]"><svg width="7" height="11" viewBox="0 0 7 11" fill="none" stroke="#333"><path d="M1 .5l5 5-5 5" /></svg></div>
        </div>
        <div className="h-[48px] flex items-center pl-[15px] font-semibold text-[#b3b2b1]">
          <div className="w-[30px] shrink-0">
            <svg width="31" height="27" viewBox="0 0 31 27" fill="none" stroke="#aaa"><path d="M1 20V1h11l3 3h13v4M1 20L8 8h20l-4 10" /><circle cx="23" cy="20" r="7" fill="#f3f2f1" /><path d="M16 20h14M23 13v14M18 16c3 1 7 1 10 0M18 24c3-1 7-1 10 0" /></svg>
          </div>
          <span className="ml-[9px] mt-[8px]">Browse <u>W</u>eb Locations</span>
          <div className="ml-auto mr-[8px]"><svg width="7" height="11" viewBox="0 0 7 11" fill="none" stroke="#aaa"><path d="M1 .5l5 5-5 5" /></svg></div>
        </div>
        <div className="h-[48px] flex items-center pl-[15px] font-semibold">
          <div className="w-[30px] shrink-0">
            <svg width="30" height="20" viewBox="0 0 30 20" fill="none" stroke="#222"><path d="M1 19.500V1h11l3 3h13v4" /><path d="M1 19.500L7 8h22l-6 11.500z" fill="#f8f8f8" /></svg>
          </div>
          <span className="ml-[9px] mt-[8px]"><u>B</u>rowse This PC...</span>
        </div>
        <div className="flex-1 flex items-center justify-center gap-[3px]">
          <span className="w-[2px] h-[2px] bg-[#aaa]" />
          <span className="w-[2px] h-[2px] bg-[#aaa]" />
          <span className="w-[2px] h-[2px] bg-[#aaa]" />
          <span className="w-[2px] h-[2px] bg-[#aaa]" />
        </div>
      </div>
    </div>
  );
}
